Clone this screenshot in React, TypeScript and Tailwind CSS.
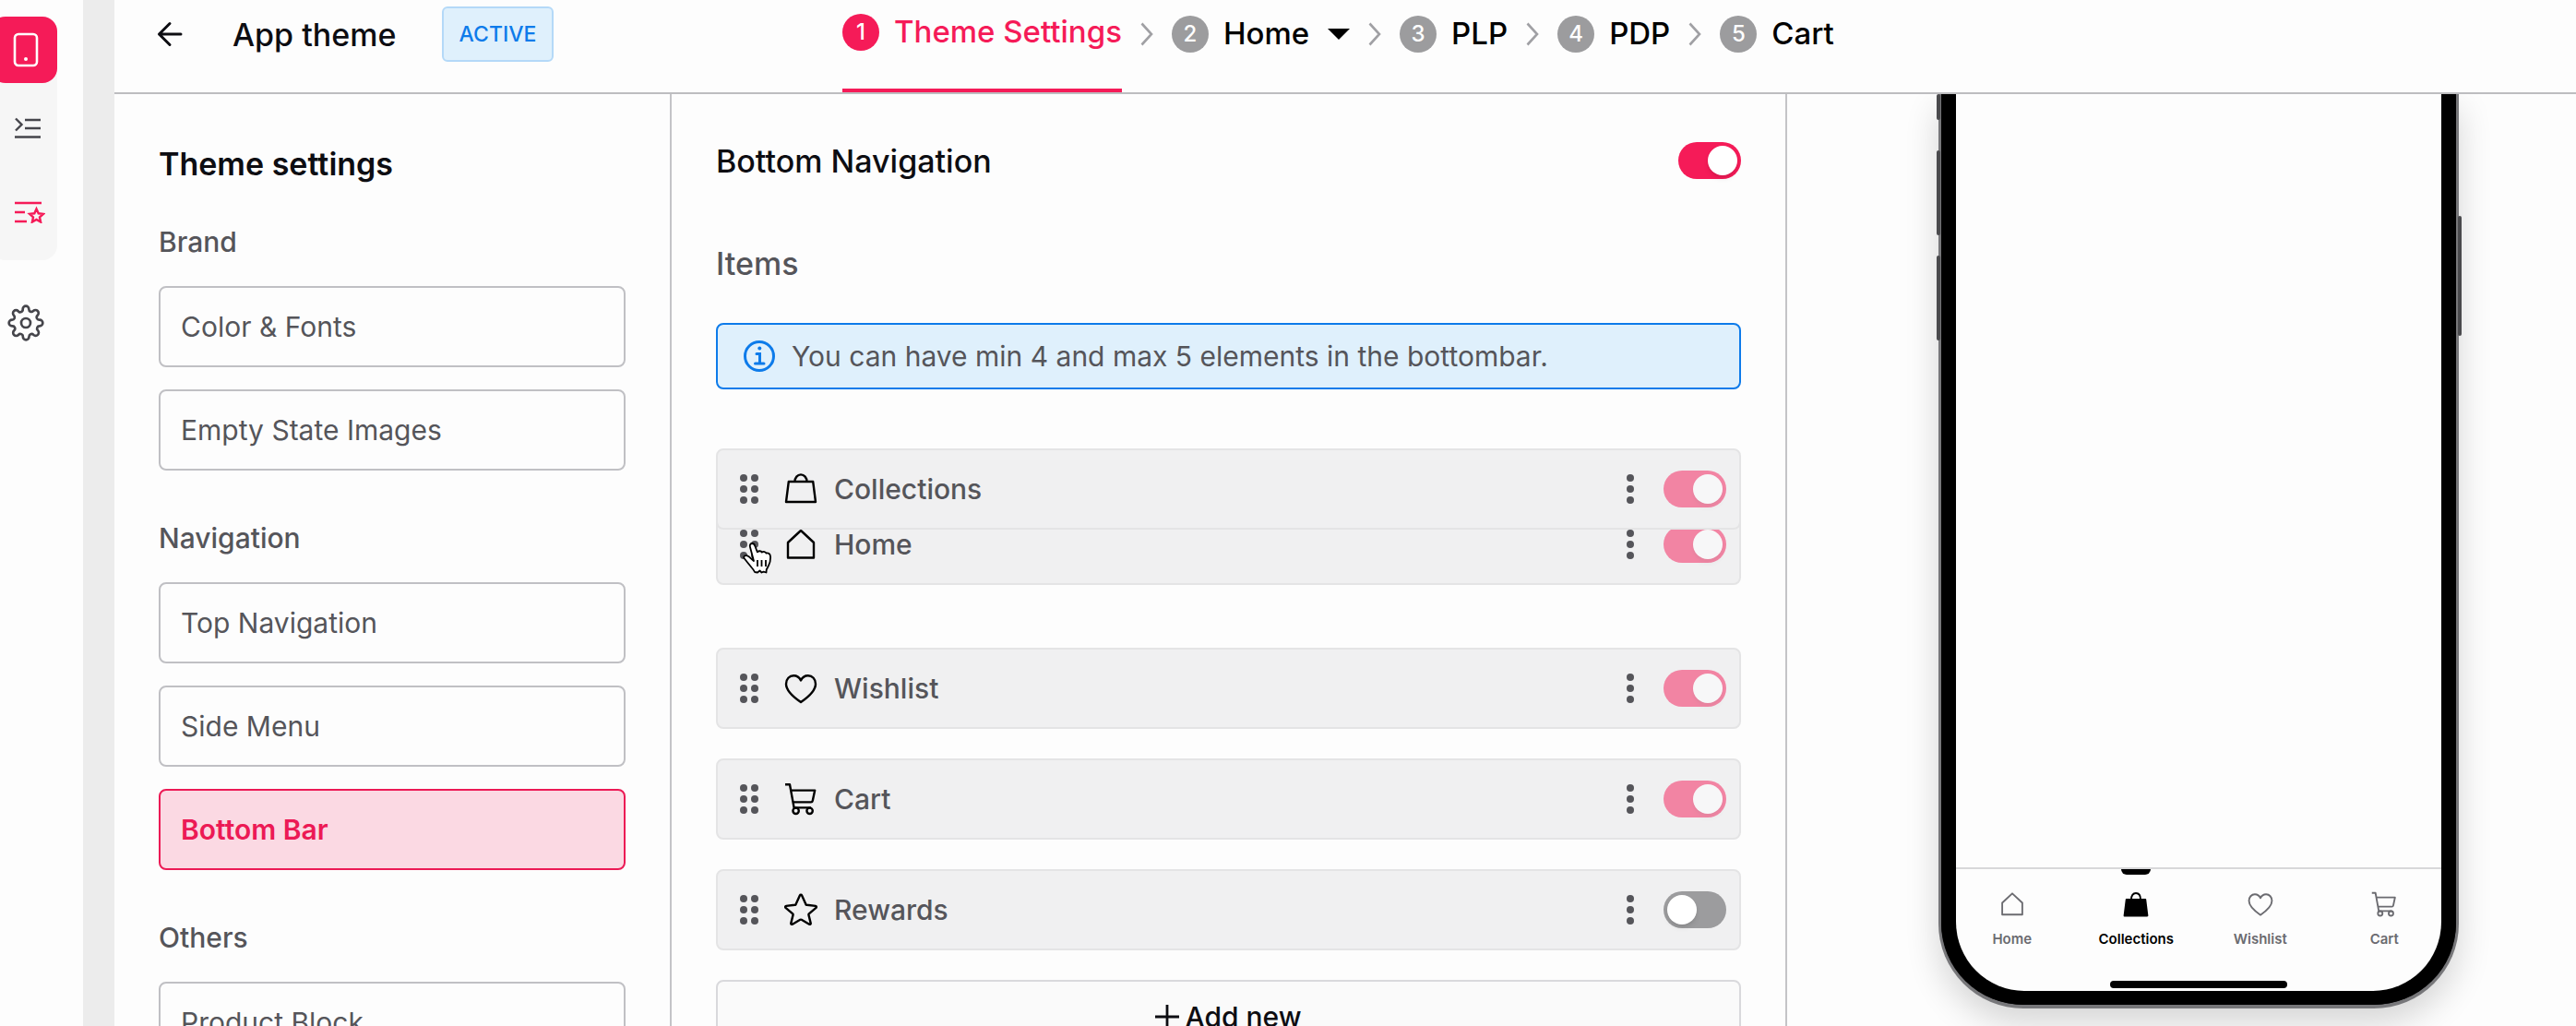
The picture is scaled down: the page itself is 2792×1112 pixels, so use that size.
import React from 'react';

type IconProps = { className?: string };

const BagIcon = ({ className }: IconProps) => (
  <svg viewBox="0 0 36 36" fill="none" stroke="currentColor" strokeWidth="2.4" strokeLinejoin="round" className={className}>
    <path d="M4.8 10h26.4L34 32H2L4.8 10z" />
    <path d="M11.500 10c0-4.200 2.800-7.600 6.500-7.600s6.500 3.400 6.500 7.600" />
  </svg>
);

const BagFilledIcon = ({ className }: IconProps) => (
  <svg viewBox="0 0 36 36" fill="none" stroke="currentColor" strokeWidth="2.4" strokeLinejoin="round" className={className}>
    <path fill="currentColor" d="M4.800 11.500h26.400L34 34H2l2.800-22.500z" />
    <path d="M11.500 11.500C11.500 6 14 2.500 18 2.500s6.500 3.500 6.500 9" />
  </svg>
);

const HomeIcon = ({ className }: IconProps) => (
  <svg viewBox="0 0 36 36" fill="none" stroke="currentColor" strokeWidth="2.4" strokeLinejoin="round" className={className}>
    <path d="M18 3 32 16v16.500H4V16L18 3z" />
  </svg>
);

const HeartIcon = ({ className }: IconProps) => (
  <svg viewBox="0 0 36 36" fill="none" stroke="currentColor" strokeWidth="2.4" strokeLinejoin="round" className={className}>
    <path d="M18 33C10 27.500 2 21 2 13.200 2 8 5.600 4.200 10.200 4.200c3.500 0 6.300 2.100 7.800 5.300 1.500-3.200 4.300-5.300 7.800-5.300C30.400 4.200 34 8 34 13.200 34 21 26 27.500 18 33z" />
  </svg>
);

const CartIcon = ({ className }: IconProps) => (
  <svg viewBox="0 0 36 36" fill="none" stroke="currentColor" strokeWidth="2.4" strokeLinejoin="round" className={className}>
    <path d="M1 2.200h5l4.600 25.200H29" />
    <path d="M7 8.600h26.200l-2.400 11.200c-.2 1-.8 1.600-1.800 1.600H9.400" />
    <circle cx="12.600" cy="30.800" r="3.200" />
    <circle cx="27.600" cy="30.800" r="3.200" />
  </svg>
);

const StarIcon = ({ className }: IconProps) => (
  <svg viewBox="0 0 36 36" fill="none" stroke="currentColor" strokeWidth="2.4" strokeLinejoin="round" className={className}>
    <path d="M16.900 2.500c.5-1 1.700-1 2.200 0l4.300 9.600c.2.400.5.600 1 .7l9.500 1.100c1 .1 1.400 1.200.6 1.900l-7.700 6.600c-.3.300-.4.600-.4 1l2.300 9.200c.2 1-.8 1.600-1.600 1.100l-8.400-4.900c-.4-.2-1-.2-1.400 0l-8.400 4.900c-.8.500-1.800-.1-1.600-1.100l2.300-9.200c0-.4-.1-.7-.4-1l-7.700-6.600c-.8-.7-.4-1.800.6-1.900l9.500-1.100c.5-.1.800-.3 1-.7l4.300-9.600z" />
  </svg>
);

const ArrowLeftIcon = ({ className }: IconProps) => (
  <svg viewBox="0 0 28 28" fill="none" stroke="currentColor" strokeWidth="3" strokeLinecap="round" strokeLinejoin="round" className={className}>
    <path d="M26 14H2.500M14 2.500 2.500 14 14 25.500" />
  </svg>
);

const PhoneIcon = ({ className }: IconProps) => (
  <svg viewBox="0 0 28 38" fill="none" stroke="currentColor" strokeWidth="2.600" className={className}>
    <rect x="2" y="2" width="24" height="34" rx="4" />
    <circle cx="14" cy="29" r="2" fill="currentColor" stroke="none" />
  </svg>
);

const IndentIcon = ({ className }: IconProps) => (
  <svg viewBox="0 0 28 24" fill="none" stroke="currentColor" strokeWidth="2.400" className={className}>
    <path d="M11 3h17M11 12h17M0 21.500h28M1 1.500l6.500 6.500L1 14.500" />
  </svg>
);

const ListStarIcon = ({ className }: IconProps) => (
  <svg viewBox="0 0 33 24" fill="none" stroke="currentColor" strokeWidth="2.400" className={className}>
    <path d="M0 2h29M0 12h11M0 22h13" />
    <path d="M23.500 8.500l2.200 4.800 5.200.6-3.900 3.500 1.100 5.200-4.600-2.600-4.600 2.600 1.100-5.200-3.900-3.500 5.200-.6 2.200-4.800z" />
  </svg>
);

const GearIcon = ({ className }: IconProps) => (
  <svg viewBox="0 0 24 24" fill="none" stroke="currentColor" strokeWidth="1.600" strokeLinecap="round" strokeLinejoin="round" className={className}>
    <circle cx="12" cy="12" r="3" />
    <path d="M19.400 15a1.650 1.650 0 0 0 .33 1.820l.06.06a2 2 0 1 1-2.830 2.830l-.06-.06a1.650 1.650 0 0 0-2.800 1.170V21a2 2 0 0 1-4 0v-.09A1.650 1.650 0 0 0 7.200 19.730l-.06.06a2 2 0 1 1-2.830-2.830l.06-.06A1.650 1.650 0 0 0 3.090 14H3a2 2 0 0 1 0-4h.09A1.650 1.650 0 0 0 4.270 7.200l-.06-.06a2 2 0 1 1 2.830-2.830l.06.06A1.650 1.650 0 0 0 10 3.090V3a2 2 0 0 1 4 0v.09a1.650 1.650 0 0 0 2.800 1.180l.06-.06a2 2 0 1 1 2.830 2.830l-.06.06A1.650 1.650 0 0 0 20.910 10H21a2 2 0 0 1 0 4h-.09a1.650 1.650 0 0 0-1.510 1z" />
  </svg>
);

const InfoIcon = ({ className }: IconProps) => (
  <svg viewBox="0 0 34 34" fill="none" stroke="currentColor" strokeWidth="3" strokeLinecap="round" className={className}>
    <circle cx="17" cy="17" r="15.500" />
    <path d="M14 14.500h3.500V25M12.500 25H22" />
    <circle cx="17.300" cy="8.500" r="2" fill="currentColor" stroke="none" />
  </svg>
);

const ChevronIcon = () => (
  <svg viewBox="0 0 14 26" fill="none" stroke="currentColor" strokeWidth="2.600" className="h-[26px] w-3.5 text-[#a0a0a4]">
    <path d="M1.500 1.500 12 13 1.500 24.500" />
  </svg>
);

const GripIcon = () => (
  <svg viewBox="0 0 20 34" fill="currentColor" className="h-[34px] w-5">
    {[5, 17, 29].map((cy) => (
      <g key={cy}>
        <circle cx="4" cy={cy} r="4" />
        <circle cx="16" cy={cy} r="4" />
      </g>
    ))}
  </svg>
);

const KebabIcon = () => (
  <svg viewBox="0 0 8 34" fill="currentColor" className="h-[34px] w-2">
    <circle cx="4" cy="5" r="4" />
    <circle cx="4" cy="17" r="4" />
    <circle cx="4" cy="29" r="4" />
  </svg>
);

const HandCursor = ({ className }: IconProps) => (
  <svg viewBox="0 0 32 34" fill="#fff" stroke="#000" strokeWidth="1.800" strokeLinejoin="round" className={className}>
    <path d="M12 20 8 5c-.7-2.600.6-4 2.200-4 1.500 0 2.500.9 3.100 2.800l2.500 6.500c1.600-1.600 4.200-1.300 5 .3 1.700-1.200 4-.7 4.700 1 2.300-.7 4.300.6 4.500 3.400.3 4.500-.2 6.500-1.800 9.500l-2.500 5-.2 3-3-.8-2 .8-2-2-2.500 2-3-.5c-1.500-3.500-5-6.500-7.500-10L1.500 17c-.9-2 .9-3.400 3-2.800C7 15 9 17.500 12 20z" />
    <path d="M16 19v7M20.500 19v7M25 19v7" />
  </svg>
);

const Toggle = ({ id, label, on, faded }: { id: string; label: string; on: boolean; faded?: boolean }) => (
  <input
    id={id}
    type="checkbox"
    role="switch"
    aria-label={label}
    defaultChecked={on}
    className={`h-10 w-[68px] shrink-0 cursor-pointer appearance-none rounded-full bg-[#9c9c9e] p-1 before:block before:size-8 before:rounded-full before:bg-white before:shadow-md checked:bg-[#f51b58] checked:before:translate-x-7 ${faded ? 'opacity-50' : ''}`}
  />
);

const steps = ['Theme Settings', 'Home', 'PLP', 'PDP', 'Cart'];

const sections = [
  { title: 'Brand', links: ['Color & Fonts', 'Empty State Images'] },
  { title: 'Navigation', links: ['Top Navigation', 'Side Menu', 'Bottom Bar'] },
  { title: 'Others', links: ['Product Block'] },
];

const items = [
  { name: 'Collections', Icon: BagIcon, on: true },
  { name: 'Home', Icon: HomeIcon, on: true, dragging: true },
  { name: 'Wishlist', Icon: HeartIcon, on: true },
  { name: 'Cart', Icon: CartIcon, on: true },
  { name: 'Rewards', Icon: StarIcon, on: false },
];

const tabs = [
  { name: 'Home', Icon: HomeIcon },
  { name: 'Collections', Icon: BagFilledIcon, active: true },
  { name: 'Wishlist', Icon: HeartIcon },
  { name: 'Cart', Icon: CartIcon },
];

const Rail = () => (
  <nav aria-label="Main" className="flex w-[90px] shrink-0 flex-col pt-[18px] text-[#45454b]">
    <div className="-ml-2.5 flex w-[72px] flex-col rounded-2xl bg-[#f6f6f6]">
      <button aria-label="App" className="flex h-[72px] items-center justify-center rounded-2xl bg-[#f51b58] pl-1 text-white">
        <PhoneIcon className="h-[38px] w-7" />
      </button>
      <button aria-label="Structure" className="flex h-[98px] items-center pl-[26px]">
        <IndentIcon className="h-6 w-7" />
      </button>
      <button aria-label="Themes" className="flex h-[94px] items-center pb-2.5 pl-[26px] text-[#f51b58]">
        <ListStarIcon className="h-6 w-[33px]" />
      </button>
    </div>
    <button aria-label="Settings" className="mt-12 ml-2 size-10">
      <GearIcon className="size-10" />
    </button>
  </nav>
);

const Header = () => (
  <header className="grid h-[102px] shrink-0 grid-cols-[789px_1fr] border-b-2 border-[#bdbdc0]">
    <div className="flex h-full items-center pb-[26px] pl-[46px]">
      <button aria-label="Back" className="mr-[54px]">
        <ArrowLeftIcon className="size-7" />
      </button>
      <h1 className="w-[227px] text-[34px] font-medium">App theme</h1>
      <span className="flex h-[60px] w-[121px] items-center justify-center rounded-md border-2 border-[#b4d9f8] bg-[#dff0fc] text-[23px] font-medium text-[#0d7bea]">
        ACTIVE
      </span>
    </div>
    <ol className="flex h-full gap-5">
      {steps.map((step, i) => (
        <li key={step} className="flex gap-5">
          {i > 0 && (
            <span className="flex items-center pb-[26px]">
              <ChevronIcon />
            </span>
          )}
          <button
            className={`flex items-center gap-4 pb-[26px] text-[33px] font-medium ${i === 0 ? 'border-b-4 border-[#f51b58] text-[#f51b58]' : 'text-black'}`}
          >
            <span
              className={`flex size-10 items-center justify-center rounded-full text-2xl text-white ${i === 0 ? 'bg-[#f51b58]' : 'bg-[#9c9c9e]'}`}
            >
              {i + 1}
            </span>
            {step}
            {step === 'Home' && (
              <svg viewBox="0 0 24 12" fill="currentColor" className="ml-1 h-3 w-6">
                <path d="M0 0h24L12 12z" />
              </svg>
            )}
          </button>
        </li>
      ))}
    </ol>
  </header>
);

const SettingsPanel = () => (
  <aside className="overflow-hidden border-r-2 border-[#c4c4c7] px-12 pt-[52px]">
    <h2 className="text-[34px] leading-12 font-semibold">Theme settings</h2>
    <div className="mt-10 space-y-[53px]">
      {sections.map((section) => (
        <section key={section.title}>
          <h3 className="text-[30px] leading-10 font-medium text-[#55555a]">{section.title}</h3>
          <div className="mt-7 flex flex-col gap-6">
            {section.links.map((link) => (
              <button
                key={link}
                className={`h-[88px] rounded-lg border-2 px-[22px] text-left text-[30px] ${
                  link === 'Bottom Bar'
                    ? 'border-[#ec1a55] bg-[#fbd9e3] font-semibold text-[#ec1a55]'
                    : 'border-[#c0c0c4] text-[#55555a]'
                }`}
              >
                {link}
              </button>
            ))}
          </div>
        </section>
      ))}
    </div>
  </aside>
);

const NavigationEditor = () => (
  <main className="overflow-hidden border-r-2 border-[#c4c4c7] px-12 pt-[52px]">
    <div className="flex h-10 items-center justify-between">
      <h2 className="text-[34px] font-medium">Bottom Navigation</h2>
      <Toggle id="bottom-navigation" label="Bottom Navigation" on />
    </div>
    <h3 className="mt-[72px] text-[34px] leading-10 font-medium text-[#55555a]">Items</h3>
    <div className="mt-11 flex h-[72px] items-center gap-[18px] rounded-lg border-2 border-[#0d7bea] bg-[#dff0fc] px-7">
      <InfoIcon className="size-[34px] text-[#0d7bea]" />
      <p className="text-[30px] text-[#55555a]">You can have min 4 and max 5 elements in the bottombar.</p>
    </div>
    <ul className="mt-16 flex flex-col gap-8">
      {items.map(({ name, Icon, on, dragging }) => (
        <li
          key={name}
          className={`relative flex h-[88px] items-center rounded-lg border-2 border-[#e4e4e5] bg-[#f0f0f1] pr-3.5 pl-6 text-[#55555a] ${dragging ? '-mt-[60px] mb-9' : 'z-10'}`}
        >
          <button aria-label={`Move ${name}`}>
            <GripIcon />
          </button>
          <Icon className="ml-7 size-9 text-black" />
          <label htmlFor={`item-${name}`} className="ml-[18px] flex-1 text-[30px] font-medium">
            {name}
          </label>
          <button aria-label={`${name} options`} className="mr-8">
            <KebabIcon />
          </button>
          <Toggle id={`item-${name}`} label={name} on={on} faded={on} />
          {dragging && <HandCursor className="absolute top-10 left-[27px] h-[34px] w-8" />}
        </li>
      ))}
      <li>
        <button className="flex h-[88px] w-full items-center justify-center gap-1.5 rounded-lg border-2 border-[#d9d9dc] bg-[#fafafa] pb-2 text-[30px] font-medium">
          <svg viewBox="0 0 26 26" stroke="currentColor" strokeWidth="2.800" className="size-[26px]">
            <path d="M13 0v26M0 13h26" />
          </svg>
          Add new
        </button>
      </li>
    </ul>
  </main>
);

const Preview = () => (
  <section aria-label="Preview" className="flex justify-center overflow-hidden pb-[19px] pl-9">
    <div className="relative flex w-[564px] rounded-b-[92px] border-x-3 border-b-4 border-[#77777a] bg-black shadow-[0_16px_36px_rgba(0,0,0,0.16)]">
      <span className="absolute top-0 -left-[5px] h-7 w-1 rounded-sm bg-[#4a4a4d]" />
      <span className="absolute top-[61px] -left-[5px] h-[92px] w-1 rounded-sm bg-[#4a4a4d]" />
      <span className="absolute top-[175px] -left-[5px] h-[92px] w-1 rounded-sm bg-[#4a4a4d]" />
      <span className="absolute top-[132px] -right-[6px] h-[130px] w-1 rounded-sm bg-[#4a4a4d]" />
      <div className="flex flex-1 flex-col justify-end overflow-hidden rounded-b-[90px] border-x-[16px] border-b-[15px] border-black bg-[#fdfdfd]">
        <div className="-mx-1.5 h-[134px] border-t-2 border-[#d8d8da]">
          <div className="grid h-[121px] grid-cols-4">
            {tabs.map(({ name, Icon, active }) => (
              <button
                key={name}
                className={`flex flex-col items-center text-[15px] font-semibold ${active ? 'text-black' : 'text-[#6b6b70]'}`}
              >
                <span className={`h-1.5 w-8 rounded-b-md ${active ? 'bg-black' : ''}`} />
                <Icon className="mt-[18px] size-7" />
                <span className="mt-3 leading-6">{name}</span>
              </button>
            ))}
          </div>
          <div className="mx-auto h-2 w-48 rounded-full bg-black" />
        </div>
      </div>
    </div>
  </section>
);

const App = () => {
  return (
    <div className="flex h-screen overflow-hidden bg-[#fdfdfd] font-['Inter','Open_Sans',sans-serif] text-[#0d0d12]">
      <Rail />
      <div className="w-[34px] shrink-0 bg-[#ececec]" />
      <div className="flex min-w-0 flex-1 flex-col">
        <Header />
        <div className="grid min-h-0 flex-1 grid-cols-[604px_1209fr_855fr]">
          <SettingsPanel />
          <NavigationEditor />
          <Preview />
        </div>
      </div>
    </div>
  );
};

export default App;
